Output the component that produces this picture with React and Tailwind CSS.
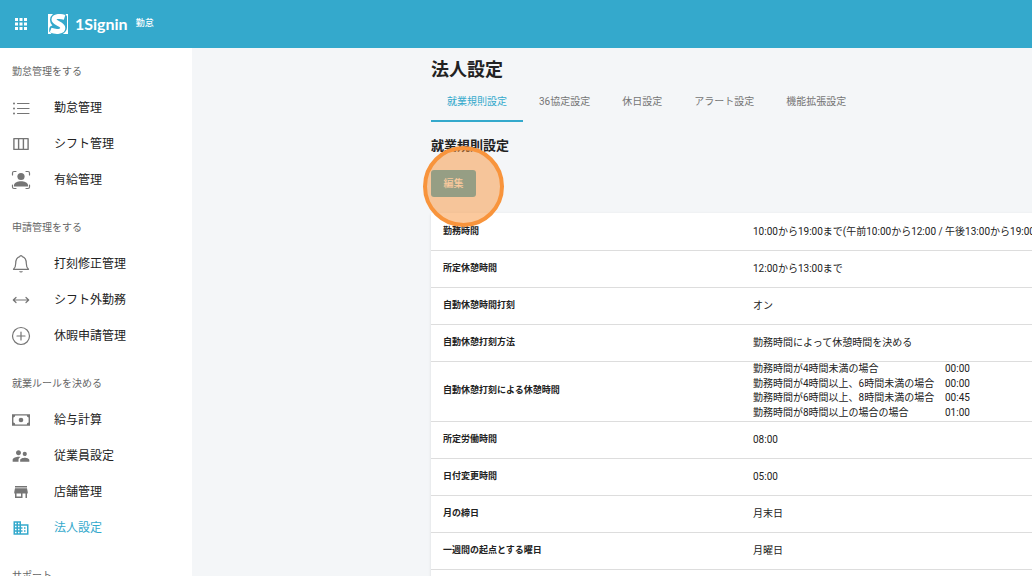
import React from 'react';
import { MdApps, MdSupervisorAccount, MdStore, MdDomain } from 'react-icons/md';

function Line({ children, className = 'size-5' }) {
  return (
    <svg
      viewBox="0 0 20 20"
      className={className}
      fill="none"
      stroke="currentColor"
      strokeWidth="1.2"
      strokeLinecap="round"
      strokeLinejoin="round"
      aria-hidden="true"
    >
      {children}
    </svg>
  );
}

const ListIcon = () => (
  <Line>
    <path d="M6.5 5.5H18M6.5 10.5H18M6.5 15.5H18" />
    <g fill="currentColor" stroke="none">
      <circle cx="3" cy="5.5" r="1" />
      <circle cx="3" cy="10.5" r="1" />
      <circle cx="3" cy="15.5" r="1" />
    </g>
  </Line>
);

const ColumnsIcon = () => (
  <Line>
    <path d="M2.9 4.6H17.1V15.4H2.9ZM7.6 4.6V15.4M12.4 4.6V15.4" strokeWidth="1.4" />
  </Line>
);

const PersonFrameIcon = () => (
  <Line>
    <path d="M1.5 5V3Q1.5 1.5 3 1.5H5M15 1.5H17Q18.5 1.5 18.5 3V5M18.5 15V17Q18.5 18.5 17 18.5H15M5 18.5H3Q1.5 18.5 1.5 17V15" />
    <g fill="currentColor" stroke="none">
      <circle cx="10" cy="6.5" r="3.6" />
      <path d="M3 16.5V15C3 12.6 7 11.2 10 11.2S17 12.6 17 15V16.5Z" />
    </g>
  </Line>
);

const BellIcon = () => (
  <Line>
    <path d="M2.5 15.3H17.5C15.8 13.8 15.3 12.6 15.3 9.5C15.3 5 13.7 3.2 11.3 2.6C11 1.2 9 1.2 8.7 2.6C6.3 3.2 4.7 5 4.7 9.5C4.7 12.6 4.2 13.8 2.5 15.3Z" />
    <path d="M8 17.2H12Q11.4 18.6 10 18.6T8 17.2Z" fill="currentColor" stroke="none" />
  </Line>
);

const ArrowsIcon = () => (
  <Line>
    <path d="M2.5 10H17.5M5 7.5L2.3 10L5 12.5M15 7.5L17.7 10L15 12.5" />
  </Line>
);

const PlusIcon = () => (
  <Line>
    <circle cx="10" cy="10" r="8.5" />
    <path d="M10 6V14M6 10H14" />
  </Line>
);

const CashIcon = () => (
  <Line>
    <path
      d="M1 4.2H19V15.8H1ZM4.2 5.6A1.8 1.8 0 0 1 2.4 7.4V12.6A1.8 1.8 0 0 1 4.2 14.4H15.8A1.8 1.8 0 0 1 17.6 12.6V7.4A1.8 1.8 0 0 1 15.8 5.6Z"
      fill="currentColor"
      fillRule="evenodd"
      stroke="none"
    />
    <circle cx="10" cy="10" r="2.3" fill="currentColor" stroke="none" />
  </Line>
);

const Logo = () => (
  <svg viewBox="0 0 20 20" className="size-5" aria-hidden="true">
    <path fill="white" d="M0 0H5Q2 2.4 2 6Q2 9.4 4.4 11.4Q1.2 12 1.2 15.5V17.5L3.6 20H0ZM20 20H14.8Q19 17.4 19 13.5V2.5L17.5 0H20Z" />
    <path
      fill="none"
      stroke="white"
      strokeWidth="5"
      d="M16.6 3.4C11 1.6 6 2.4 6 5.6C6 9.4 14.8 9.8 14.8 14C14.8 17.8 8.4 18.4 2.6 16.2"
    />
  </svg>
);

const sections = [
  {
    title: '勤怠管理をする',
    items: [
      { label: '勤怠管理', icon: <ListIcon /> },
      { label: 'シフト管理', icon: <ColumnsIcon /> },
      { label: '有給管理', icon: <PersonFrameIcon /> },
    ],
  },
  {
    title: '申請管理をする',
    items: [
      { label: '打刻修正管理', icon: <BellIcon /> },
      { label: 'シフト外勤務', icon: <ArrowsIcon /> },
      { label: '休暇申請管理', icon: <PlusIcon /> },
    ],
  },
  {
    title: '就業ルールを決める',
    items: [
      { label: '給与計算', icon: <CashIcon /> },
      { label: '従業員設定', icon: <MdSupervisorAccount className="size-5" /> },
      { label: '店舗管理', icon: <MdStore className="size-[18px]" /> },
      { label: '法人設定', icon: <MdDomain className="size-[18px]" />, active: true },
    ],
  },
  { title: 'サポート', items: [] },
];

const tabs = ['就業規則設定', '36協定設定', '休日設定', 'アラート設定', '機能拡張設定'];

const breaks = [
  ['勤務時間が4時間未満の場合', '00:00'],
  ['勤務時間が4時間以上、6時間未満の場合', '00:00'],
  ['勤務時間が6時間以上、8時間未満の場合', '00:45'],
  ['勤務時間が8時間以上の場合の場合', '01:00'],
];

function BreakTable() {
  return (
    <table className="h-[59px] leading-[14px]">
      <tbody>
        {breaks.map(([rule, time]) => (
          <tr key={rule}>
            <td className="min-w-48 py-0">{rule}</td>
            <td className="py-0">{time}</td>
          </tr>
        ))}
      </tbody>
    </table>
  );
}

const rows = [
  ['勤務時間', '10:00から19:00まで(午前10:00から12:00 / 午後13:00から19:00)'],
  ['所定休憩時間', '12:00から13:00まで'],
  ['自動休憩時間打刻', 'オン'],
  ['自動休憩打刻方法', '勤務時間によって休憩時間を決める'],
  ['自動休憩打刻による休憩時間', <BreakTable key="breaks" />],
  ['所定労働時間', '08:00'],
  ['日付変更時間', '05:00'],
  ['月の締日', '月末日'],
  ['一週間の起点とする曜日', '月曜日'],
  ['', ''],
];

export default function App() {
  return (
    <div className="flex h-screen flex-col overflow-hidden bg-[#f4f6f8] font-[Roboto,'Noto_Sans_CJK_JP',sans-serif] text-[#222]">
      <header className="flex h-12 shrink-0 items-center bg-[#34a9cc] pl-3 text-white">
        <button type="button" aria-label="アプリ一覧" className="mr-[18px]">
          <MdApps className="size-[18px]" />
        </button>
        <a href="#home" className="flex items-center">
          <Logo />
          <span className="ml-[7px] font-[Lato,sans-serif] text-base font-bold">1Signin</span>
          <span className="ml-2 text-[9px] font-medium">勤怠</span>
        </a>
      </header>

      <div className="flex min-h-0 flex-1">
        <nav className="w-48 shrink-0 overflow-hidden bg-white">
          {sections.map((section) => (
            <section key={section.title}>
              <h2 className="flex h-[42px] items-center px-3 pt-1 text-[10px] text-[#666]">
                {section.title}
              </h2>
              <ul className="pb-1.5">
                {section.items.map((item) => (
                  <li key={item.label}>
                    <a
                      href="#menu"
                      className={
                        item.active
                          ? 'flex h-9 items-center pl-[11px] text-xs text-[#34a9cc]'
                          : 'flex h-9 items-center pl-[11px] text-xs text-[#222]'
                      }
                    >
                      <span
                        className={
                          item.active
                            ? 'mr-[23px] flex w-5 justify-center'
                            : 'mr-[23px] flex w-5 justify-center text-[#757575]'
                        }
                      >
                        {item.icon}
                      </span>
                      {item.label}
                    </a>
                  </li>
                ))}
              </ul>
            </section>
          ))}
        </nav>

        <main className="min-w-0 flex-1 overflow-hidden pl-[239px]">
          <h1 className="pt-2 text-lg leading-7 font-bold">法人設定</h1>
          <div role="tablist" className="flex h-[38px] text-[10px]">
            {tabs.map((tab, i) => (
              <button
                key={tab}
                type="button"
                role="tab"
                aria-selected={i === 0}
                className={
                  i === 0
                    ? 'border-b-2 border-[#34a9cc] px-4 pb-0.5 text-[#34a9cc]'
                    : 'border-b-2 border-transparent px-4 pb-0.5 text-[#757575]'
                }
              >
                {tab}
              </button>
            ))}
          </div>
          <h2 className="mt-3 text-[13px] leading-6 font-bold">就業規則設定</h2>
          <div className="relative mt-3 w-fit">
            <button
              type="button"
              className="block h-[27px] w-[45px] rounded-[3px] bg-[#34a9cc] text-[10px] font-medium text-white"
            >
              編集
            </button>
            <span className="pointer-events-none absolute -top-6 -left-2 size-[81px] rounded-full border-4 border-[#f8943c] bg-[#f8943c]/50" />
          </div>

          <table className="mt-4 w-[960px] border-collapse bg-white shadow">
            <tbody>
              {rows.map(([label, value]) => (
                <tr key={label} className="h-[37px] border-b border-[#ddd]">
                  <th scope="row" className="w-[310px] px-3 text-left text-[9px] font-bold">
                    {label}
                  </th>
                  <td className="px-3 text-[10px] whitespace-nowrap">{value}</td>
                </tr>
              ))}
            </tbody>
          </table>
        </main>
      </div>
    </div>
  );
}
